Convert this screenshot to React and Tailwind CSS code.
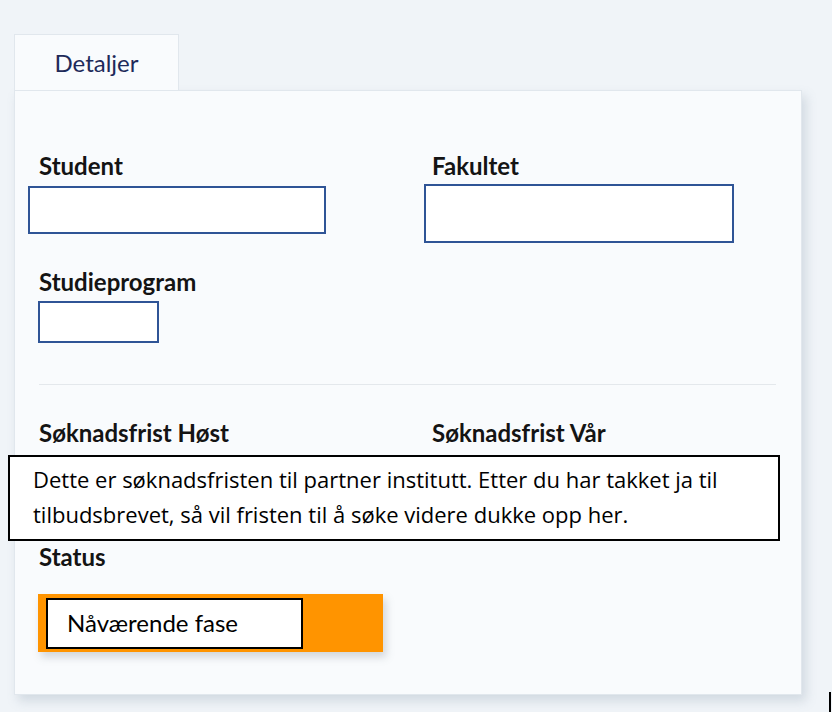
export default function App() {
  const label = "block text-[24px] leading-6 font-bold text-[#141414]";
  return (
    <div
      className="relative w-[832px] h-[712px] overflow-hidden bg-[#f0f4f8] pt-[34px] pl-[14px]"
      style={{ fontFamily: "Lato, 'Noto Sans', sans-serif" }}
    >
      {/* tab */}
      <div className="relative z-10 flex h-[56px] w-[165px] items-center justify-center border border-b-0 border-[#e1e7ed] bg-[#f9fbfd] text-[24px] text-[#1e2a5a]">
        Detaljer
      </div>

      {/* panel */}
      <div className="h-[605px] w-[788px] border border-[#e1e7ed] bg-[#f9fbfd] pl-[24px] pr-[24px] pt-[63px] shadow-[4px_6px_10px_rgba(120,140,160,0.25)]">
        <div className="grid grid-cols-[393px_1fr]">
          <div>
            <span className={label}>Student</span>
            <div className="-ml-[11px] mt-[8px] h-[48px] w-[298px] border-2 border-[#2f5496] bg-white" />
          </div>
          <div>
            <span className={label}>Fakultet</span>
            <div className="-ml-[8px] mt-[6px] h-[59px] w-[310px] border-2 border-[#2f5496] bg-white" />
          </div>
        </div>

        <div className="mt-[27px]">
          <span className={label}>Studieprogram</span>
          <div className="-ml-[1px] mt-[7px] h-[42px] w-[121px] border-2 border-[#2f5496] bg-white" />
        </div>

        <div className="mt-[41px] h-px w-[737px] bg-[#e4e8ec]" />

        <div className="mt-[36px] grid grid-cols-[393px_1fr]">
          <span className={label}>Søknadsfrist Høst</span>
          <span className={label}>Søknadsfrist Vår</span>
        </div>

        <div className="mt-[100px]">
          <span className={label}>Status</span>
          <div className="-ml-[1px] mt-[25px] flex h-[58px] w-[345px] items-center bg-[#ff9400] pl-[8px] shadow-[3px_5px_8px_rgba(120,130,140,0.3)]">
            <div className="flex h-[51px] w-[257px] items-center border-2 border-black bg-white pl-[19px] text-[24px] text-black">
              Nåværende fase
            </div>
          </div>
        </div>
      </div>

      {/* info callout */}
      <div
        className="absolute left-[8px] top-[455px] h-[86px] w-[772px] border-2 border-black bg-white pl-[23px] pt-[5px] text-[22px] leading-[35px] text-black"
        style={{ fontFamily: "'Open Sans', sans-serif" }}
      >
        Dette er søknadsfristen til partner institutt. Etter du har takket ja til
        <br />
        tilbudsbrevet, så vil fristen til å søke videre dukke opp her.
      </div>

      <div className="absolute left-[829px] top-[692px] h-[20px] w-[2px] bg-black" />
    </div>
  );
}
